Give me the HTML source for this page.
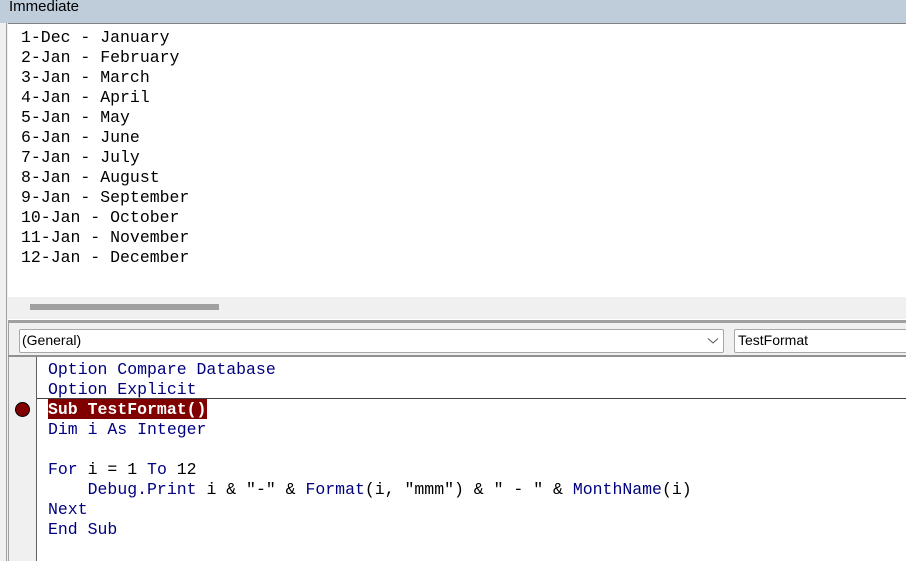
<!DOCTYPE html>
<html><head><style>
*{margin:0;padding:0;box-sizing:border-box}
body{width:906px;height:561px;overflow:hidden;background:#f0f0f0;position:relative;font-family:"Liberation Sans",sans-serif}
.abs{position:absolute}
.mono{font-family:"Liberation Mono",monospace;font-size:16.5px;line-height:20px;white-space:pre}
.k{color:#00007f}
.t{color:#000}
</style></head><body>
<div class="abs" style="left:0;top:0;width:906px;height:23px;background:#bfcddb"></div>
<div class="abs" style="left:9px;top:0;font-size:15px;line-height:14px;color:#000">Immediate</div>
<div class="abs" style="left:0;top:23px;width:7px;height:538px;background:#f0f0f0;border-right:1px solid #a0a0a0"></div>
<div class="abs" style="left:8px;top:23px;width:898px;height:297px;background:#fff;border-top:1px solid #808080"></div>
<div class="abs mono t" style="left:21px;top:28px">1-Dec - January
2-Jan - February
3-Jan - March
4-Jan - April
5-Jan - May
6-Jan - June
7-Jan - July
8-Jan - August
9-Jan - September
10-Jan - October
11-Jan - November
12-Jan - December</div>
<div class="abs" style="left:8px;top:297px;width:898px;height:22px;background:#f0f0f0"></div>
<div class="abs" style="left:30px;top:304px;width:189px;height:6px;background:#a0a0a0"></div>
<div class="abs" style="left:8px;top:320px;width:898px;height:3px;background:#a0a0a0"></div>
<div class="abs" style="left:8px;top:323px;width:898px;height:35px;background:#f0f0f0;border-left:1px solid #a0a0a0"></div>
<div class="abs" style="left:19px;top:329px;width:705px;height:24px;background:#fff;border:1px solid #a8a8a8;border-radius:2px"></div>
<div class="abs" style="left:22px;top:332px;font-size:14px;line-height:16px">(General)</div>
<svg class="abs" style="left:707px;top:337px" width="12" height="8"><path d="M1 1.5 L6 6 L11 1.5" fill="none" stroke="#555" stroke-width="1"/></svg>
<div class="abs" style="left:734px;top:329px;width:180px;height:24px;background:#fff;border:1px solid #a8a8a8;border-radius:2px"></div>
<div class="abs" style="left:738px;top:332px;font-size:14px;line-height:16px">TestFormat</div>
<div class="abs" style="left:8px;top:355px;width:898px;height:2px;background:#909090"></div>
<div class="abs" style="left:8px;top:357px;width:29px;height:204px;background:#f0f0f0;border-left:1px solid #a0a0a0"></div>
<div class="abs" style="left:36px;top:357px;width:1px;height:204px;background:#606060"></div>
<div class="abs" style="left:37px;top:357px;width:869px;height:204px;background:#fff"></div>
<div class="abs" style="left:37px;top:398px;width:869px;height:1px;background:#404040"></div>
<div class="abs" style="left:15px;top:402px;width:15px;height:15px;border-radius:50%;background:#800000;border:1px solid #000"></div>
<div class="abs" style="left:48px;top:399px;width:159px;height:20px;background:#800000"></div>
<div class="abs mono" style="left:48px;top:360px"><span class="k">Option Compare Database
Option Explicit</span>
<span style="color:#fff;font-weight:bold">Sub TestFormat()</span>
<span class="k">Dim i As Integer</span>

<span class="k">For</span> <span class="t">i = 1</span> <span class="k">To</span> <span class="t">12</span>
    <span class="k">Debug.Print</span> <span class="t">i &amp; "-" &amp;</span> <span class="k">Format</span><span class="t">(i, "mmm") &amp; " - " &amp;</span> <span class="k">MonthName</span><span class="t">(i)</span>
<span class="k">Next
End Sub</span></div>
</body></html>
